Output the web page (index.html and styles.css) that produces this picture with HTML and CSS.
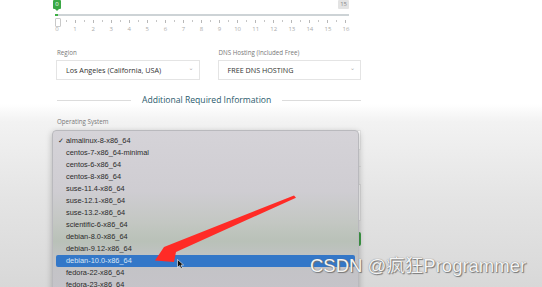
FILE: index.html
```html
<!DOCTYPE html>
<html lang="en">
<head>
    <meta charset="UTF-8">
    <title>Server Order</title>
    <link rel="stylesheet" href="styles.css">
</head>
<body>
    <div class="page">
        <div class="slider">
            <div class="badges">
                <span class="badge badge-on">0</span>
                <span class="badge badge-max">15</span>
            </div>
            <div class="track"><div class="fill"></div></div>
            <div class="ticks">
                <span class="handle"></span>
                <i class="tick big"></i><i class="tick"></i><i class="tick big"></i><i class="tick"></i>
                <i class="tick big"></i><i class="tick"></i><i class="tick big"></i><i class="tick"></i>
                <i class="tick big"></i><i class="tick"></i><i class="tick big"></i><i class="tick"></i>
                <i class="tick big"></i><i class="tick"></i><i class="tick big"></i><i class="tick"></i>
                <i class="tick big"></i><i class="tick"></i><i class="tick big"></i><i class="tick"></i>
                <i class="tick big"></i><i class="tick"></i><i class="tick big"></i><i class="tick"></i>
                <i class="tick big"></i><i class="tick"></i><i class="tick big"></i><i class="tick"></i>
                <i class="tick big"></i><i class="tick"></i><i class="tick big"></i><i class="tick"></i>
                <i class="tick big"></i>
            </div>
            <div class="scale">
                <span>0</span><span>1</span><span>2</span><span>3</span><span>4</span><span>5</span>
                <span>6</span><span>7</span><span>8</span><span>9</span><span>10</span><span>11</span>
                <span>12</span><span>13</span><span>14</span><span>15</span><span>16</span>
            </div>
        </div>

        <div class="row">
            <div class="field">
                <label>Region</label>
                <div class="select">Los Angeles (California, USA)<span class="chev">&#8964;</span></div>
            </div>
            <div class="field">
                <label>DNS Hosting (Included Free)</label>
                <div class="select">FREE DNS HOSTING<span class="chev">&#8964;</span></div>
            </div>
        </div>

        <div class="divider"><span>Additional Required Information</span></div>

        <div class="field os">
            <label>Operating System</label>
            <div class="select"><span class="chev">&#8964;</span></div>
        </div>
        <div class="sep"></div>
        <div class="textarea"></div>
        <div class="actions"><span class="btn"></span></div>
    </div>

    <ul class="menu">
        <li class="checked">almalinux-8-x86_64</li>
        <li>centos-7-x86_64-minimal</li>
        <li>centos-6-x86_64</li>
        <li>centos-8-x86_64</li>
        <li>suse-11.4-x86_64</li>
        <li>suse-12.1-x86_64</li>
        <li>suse-13.2-x86_64</li>
        <li>scientific-6-x86_64</li>
        <li>debian-8.0-x86_64</li>
        <li>debian-9.12-x86_64</li>
        <li class="active">debian-10.0-x86_64</li>
        <li>fedora-22-x86_64</li>
        <li>fedora-23-x86_64</li>
    </ul>

    <svg class="arrow" width="542" height="287" viewBox="0 0 542 287">
        <polygon points="294,195.5 296,197.8 176,252 174,262 155,260.5 164,247" fill="#ff2b26"/>
    </svg>
    <svg class="cursor" width="8" height="11" viewBox="0 0 8 11">
        <path d="M0.5 0.5 L0.5 8.5 L2.5 6.6 L4 9.8 L5.4 9.2 L4 6 L6.6 6 Z" fill="#111" stroke="#fff" stroke-width="0.6"/>
    </svg>

    <div class="watermark">CSDN @疯狂Programmer</div>
</body>
</html>
```

FILE: styles.css
```css
body {
    margin: 0;
    width: 542px;
    height: 287px;
    overflow: hidden;
    position: relative;
    font-family: 'Open Sans', 'Liberation Sans', sans-serif;
    color: #333;
    background: linear-gradient(to bottom, #fff 0, #fff 104px, #f2f2f2 122px, #e4e4e4 200px, #d8d8d8 287px);
}
.page {
    width: 306px;
    margin-left: 55px;
}
.slider {
    width: 294px;
}
.badges {
    display: flex;
    justify-content: space-between;
    height: 10px;
}
.badge {
    height: 9px;
    line-height: 9px;
    font-size: 6px;
    padding: 0 2px;
    border-radius: 1px;
    text-align: center;
    position: relative;
}
.badge-on {
    background: #3aa845;
    color: #fff;
    min-width: 4px;
    margin-left: -2px;
}
.badge-on::after {
    content: '';
    position: absolute;
    left: 2px;
    bottom: -2px;
    border-left: 2px solid transparent;
    border-right: 2px solid transparent;
    border-top: 2px solid #3aa845;
}
.badge-max {
    background: #e3e3e3;
    color: #8a8a8a;
}
.track {
    margin-top: 4px;
    height: 2px;
    background: #cdd3d6;
}
.fill {
    width: 3px;
    height: 2px;
    background: #3cb043;
}
.ticks {
    position: relative;
    height: 10px;
    margin-left: 2px;
    width: 289px;
    display: flex;
    justify-content: space-between;
    align-items: center;
}
.tick {
    width: 1px;
    height: 2px;
    background: #c6c6c6;
}
.tick.big {
    height: 3px;
    background: #b8b8b8;
}
.handle {
    position: absolute;
    left: -2px;
    top: 2px;
    width: 4px;
    height: 7px;
    border: 1px solid #c9c9c9;
    border-radius: 1px;
    background: #fff;
}
.scale {
    margin-left: 2px;
    width: 289px;
    height: 7px;
    display: flex;
    justify-content: space-between;
    font-size: 6px;
    line-height: 7px;
    color: #aaa;
}
.scale span {
    width: 0;
    display: flex;
    justify-content: center;
}
.row {
    display: flex;
    gap: 17px;
    margin-top: 15px;
}
.field {
    flex: 1;
}
.field label {
    display: block;
    font-size: 6.2px;
    line-height: 9px;
    color: #777;
    padding-left: 2px;
}
.select {
    margin-top: 3px;
    margin-left: 1px;
    height: 18px;
    border: 1px solid #e4e4e4;
    background: #fff;
    font-size: 7.2px;
    line-height: 18px;
    color: #333;
    padding-left: 9px;
    position: relative;
}
.chev {
    position: absolute;
    right: 5px;
    top: -2px;
    color: #aaa;
    font-size: 6px;
    font-family: 'DejaVu Sans', sans-serif;
}
.divider {
    margin-top: 15px;
    height: 10px;
    display: flex;
    align-items: center;
    gap: 11px;
    font-size: 8.6px;
    color: #2a5a6c;
}
.divider::before,
.divider::after {
    content: '';
    flex: 1;
    height: 1px;
    background: #dcdcdc;
}
.divider::before {
    margin-left: 2px;
    max-width: 74px;
}
.os {
    margin-top: 12px;
}
.os .select {
    height: 18px;
    margin-top: 4px;
}
.sep {
    margin-top: 16px;
    height: 1px;
    background: #dadada;
}
.textarea {
    margin-top: 17px;
    height: 35px;
    border: 1px solid #d8d8d8;
    background: #f6f6f6;
}
.actions {
    margin-top: 11px;
    display: flex;
    justify-content: flex-end;
}
.btn {
    width: 40px;
    height: 14px;
    border-radius: 2px;
    background: #3f9a46;
}
.menu {
    position: absolute;
    left: 52px;
    top: 130px;
    width: 299px;
    height: 170px;
    margin: 0;
    padding: 4px 3px 0;
    list-style: none;
    border: 1px solid #b9b9bd;
    border-radius: 4px;
    box-shadow: 0 2px 6px rgba(0, 0, 0, 0.25);
    background: linear-gradient(to bottom, #d5d3d8 0, #cfcdd2 60px, #c3c7c2 92px, #b9c1b8 110px, #c3c3c6 130px, #c6c4ca 170px);
    font-family: 'Liberation Sans', 'DejaVu Sans', sans-serif;
    font-size: 7.4px;
    color: #2a2a2a;
}
.menu li {
    height: 12px;
    line-height: 12px;
    padding-left: 10px;
    position: relative;
}
.menu li.checked::before {
    content: '\2713';
    position: absolute;
    left: 2px;
    font-family: 'DejaVu Sans', sans-serif;
    font-size: 7px;
}
.menu li.active {
    background: #3377c8;
    color: #d9e6f5;
    border-radius: 2px;
}
.arrow {
    position: absolute;
    left: 0;
    top: 0;
}
.cursor {
    position: absolute;
    left: 177px;
    top: 259px;
}
.watermark {
    position: absolute;
    left: 310px;
    top: 254px;
    font-family: 'Liberation Sans', 'Noto Sans CJK SC', sans-serif;
    font-size: 18.5px;
    line-height: 24px;
    color: #f4f4f4;
    text-shadow: 0 0 1px #666, 1px 1px 1px #777;
    white-space: nowrap;
}
```
